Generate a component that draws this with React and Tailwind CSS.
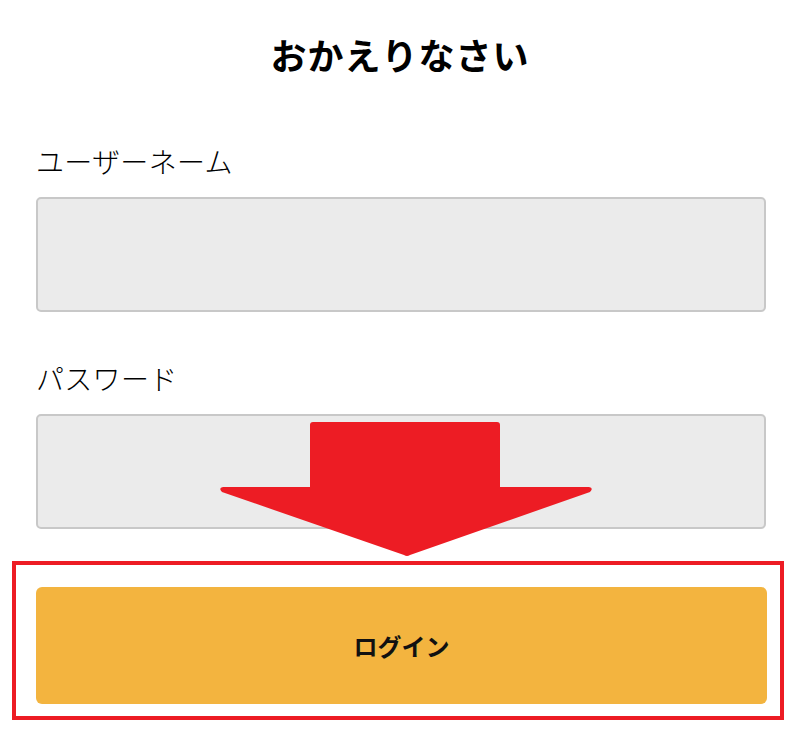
import React from "react";

export default function App() {
  return (
    <div className="relative w-[800px] h-[753px] bg-white overflow-hidden text-black font-['Noto_Sans_CJK_JP','Noto_Sans',sans-serif]">
      <h1 className="pt-[36px] text-center text-[36px] leading-none font-bold tracking-[1px]">
        おかえりなさい
      </h1>

      <div className="pl-[36px] pr-[34px]">
        <label className="block mt-[75px] text-[28px] leading-none font-light tracking-[0.3px]">ユーザーネーム</label>
        <div className="mt-[22px] h-[115px] rounded-[5px] border-2 border-[#c8c8c8] bg-[#ebebeb]" />

        <label className="block mt-[52px] text-[28px] leading-none font-light tracking-[0.3px]">パスワード</label>
        <div className="mt-[22px] h-[115px] rounded-[5px] border-2 border-[#c8c8c8] bg-[#ebebeb]" />
      </div>

      <div className="ml-[12px] mt-[32px] w-[772px] border-[4px] border-[#ed1c24] pl-[20px] pr-[13px] pt-[22px] pb-[12px]">
        <button className="flex h-[117px] w-full items-center justify-center rounded-[6px] bg-[#f3b43f] text-[24px] font-bold leading-none text-[#111]">
          ログイン
        </button>
      </div>

      <svg
        className="absolute left-[218px] top-[422px]"
        width="376"
        height="136"
        viewBox="0 0 376 136"
      >
        <path
          d="M92 3 Q92 0 95 0 L279 0 Q282 0 282 3 L282 65 L371 65 Q376 66 372 70 L192 133 Q189 135 186 133 L4 70 Q0 66 5 65 L92 65 Z"
          fill="#ed1c24"
        />
      </svg>
    </div>
  );
}
